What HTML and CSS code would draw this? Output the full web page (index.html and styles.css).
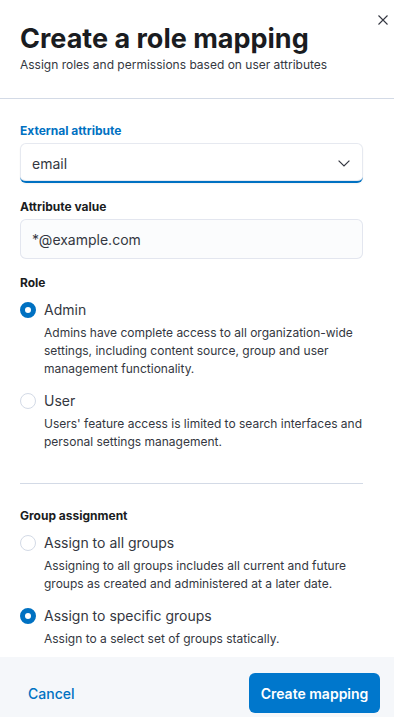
FILE: index.html
```html
<!DOCTYPE html>
<html lang="en">
<head>
<meta charset="utf-8">
<title>Create a role mapping</title>
<link rel="stylesheet" href="styles.css">
</head>
<body>
<div class="flyout">
  <button class="close" aria-label="Close">
    <svg width="10" height="10" viewBox="0 0 10 10"><path d="M0.5 0.5 L9.5 9.5 M9.5 0.5 L0.5 9.5" stroke="#343741" stroke-width="1.1" fill="none"/></svg>
  </button>
  <header class="header">
    <h1 class="title">Create a role mapping</h1>
    <p class="subtitle">Assign roles and permissions based on user attributes</p>
  </header>
  <main class="body">
    <div class="field">
      <label class="label label-active">External attribute</label>
      <div class="control select">
        <span>email</span>
        <svg class="chevron" width="12" height="7" viewBox="0 0 12 7"><path d="M0.6 0.6 L6 6 L11.4 0.6" stroke="#343741" stroke-width="1.2" fill="none"/></svg>
      </div>
    </div>
    <div class="field">
      <label class="label">Attribute value</label>
      <div class="control input">*@example.com</div>
    </div>
    <div class="field">
      <label class="label">Role</label>
      <div class="radios">
        <div class="radio">
          <span class="dot on"></span>
          <div class="radio-text">
            <div class="radio-label">Admin</div>
            <p class="radio-desc">Admins have complete access to all organization-wide settings, including content source, group and user management functionality.</p>
          </div>
        </div>
        <div class="radio">
          <span class="dot"></span>
          <div class="radio-text">
            <div class="radio-label">User</div>
            <p class="radio-desc">Users' feature access is limited to search interfaces and personal settings management.</p>
          </div>
        </div>
      </div>
    </div>
    <hr class="rule">
    <div class="field">
      <label class="label">Group assignment</label>
      <div class="radios">
        <div class="radio">
          <span class="dot"></span>
          <div class="radio-text">
            <div class="radio-label">Assign to all groups</div>
            <p class="radio-desc">Assigning to all groups includes all current and future groups as created and administered at a later date.</p>
          </div>
        </div>
        <div class="radio">
          <span class="dot on"></span>
          <div class="radio-text">
            <div class="radio-label">Assign to specific groups</div>
            <p class="radio-desc">Assign to a select set of groups statically.</p>
          </div>
        </div>
      </div>
    </div>
  </main>
  <footer class="footer">
    <button class="btn-empty">Cancel</button>
    <button class="btn-primary">Create mapping</button>
  </footer>
</div>
</body>
</html>
```
FILE: styles.css
```css
* { box-sizing: border-box; }
html, body { margin: 0; padding: 0; }
body {
  font-family: Inter, "Noto Sans", sans-serif;
  color: #343741;
  background: #fff;
}
.flyout {
  position: relative;
  height: 717px;
  display: flex;
  flex-direction: column;
  overflow: hidden;
}
.close {
  position: absolute;
  top: 15px;
  right: 6px;
  width: 10px;
  height: 10px;
  padding: 0;
  border: 0;
  background: none;
  display: flex;
}
.header {
  padding: 22px 20px 0 20px;
  height: 99px;
  border-bottom: 1px solid #d3dae6;
  flex: none;
}
.title {
  margin: 0;
  font-size: 27px;
  line-height: 34px;
  font-weight: 700;
  color: #1a1c21;
}
.subtitle {
  margin: 0;
  font-size: 12px;
  line-height: 18px;
  color: #343741;
}
.body {
  flex: 1;
  overflow: hidden;
  padding: 24px 31px 0 20px;
}
.field { display: flex; flex-direction: column; }
.field + .field { margin-top: 16px; }
.label {
  font-size: 12px;
  line-height: 16px;
  font-weight: 700;
  color: #1a1c21;
  margin-bottom: 4px;
}
.label-active { color: #0071c2; }
.control {
  height: 40px;
  border-radius: 6px;
  font-size: 14px;
  padding: 0 12px;
  display: flex;
  align-items: center;
  color: #343741;
}
.select {
  background: #fff;
  box-shadow: inset 0 0 0 1px #e6e9f0, 0 1px 2px rgba(0,0,0,0.05);
  border-bottom: 2px solid #0071c2;
  justify-content: space-between;
  padding-top: 2px;
}
.chevron { margin-right: 1px; }
.input {
  background: #fbfcfd;
  box-shadow: inset 0 0 0 1px #e3e6ef;
}
.radios { margin-top: 5px; }
.radio { display: flex; gap: 8px; }
.radio + .radio { margin-top: 13px; }
.dot {
  flex: none;
  width: 16px;
  height: 16px;
  border-radius: 50%;
  border: 1px solid #d3dae6;
  background: #fff;
  margin-top: 2px;
}
.dot.on {
  border: 5px solid #0071c2;
  background: #fff;
}
.radio-label {
  font-size: 14px;
  line-height: 20px;
  color: #343741;
}
.radio-desc {
  margin: 4px 0 0 0;
  font-size: 12px;
  line-height: 18px;
  color: #343741;
}
.rule {
  margin: 32px 0 24px 0;
  border: 0;
  border-top: 1px solid #d3dae6;
}
.footer {
  flex: none;
  height: 60px;
  background: #f5f7fa;
  display: flex;
  justify-content: space-between;
  align-items: flex-start;
  padding: 16px 14px 0 20px;
}
.btn-empty {
  font-family: inherit;
  border: 0;
  background: none;
  color: #0071c2;
  font-size: 14px;
  font-weight: 500;
  height: 40px;
  padding: 0 8px;
}
.btn-primary {
  font-family: inherit;
  border: 0;
  background: #0077cc;
  color: #fff;
  font-size: 14px;
  font-weight: 600;
  height: 40px;
  padding: 0;
  border-radius: 6px;
  width: 131px;
  white-space: nowrap;
}
```
